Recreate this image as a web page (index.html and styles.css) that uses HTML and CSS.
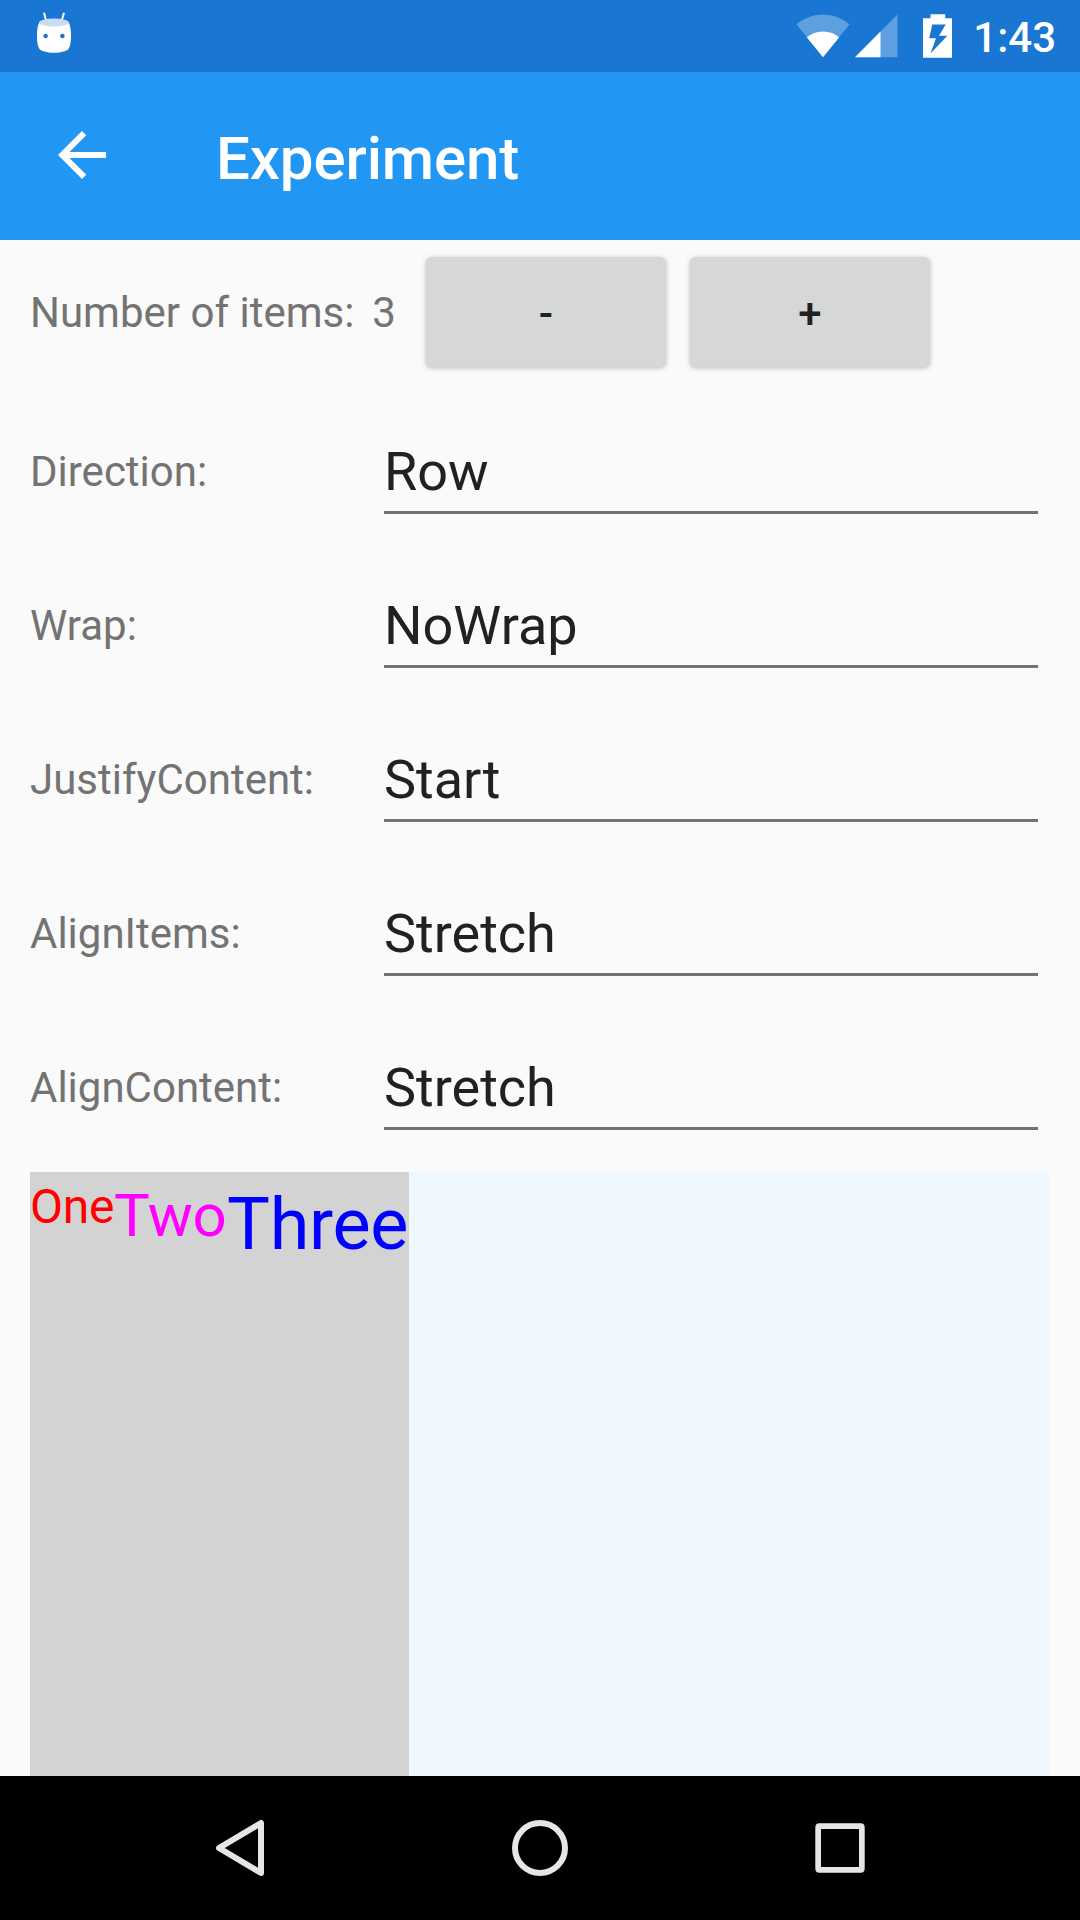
FILE: index.html
```html
<!DOCTYPE html>
<html lang="en">
<head>
<meta charset="utf-8">
<title>Experiment</title>
<link rel="stylesheet" href="styles.css">
</head>
<body>
<div class="screen">
  <header class="status-bar">
    <svg class="notification" width="36" height="42" viewBox="0 0 36 42">
      <path d="M8.2 1.5 10.2 9M27.8 1.5 25.6 9" fill="none" stroke="#fff" stroke-width="2" stroke-linecap="round"/>
      <path d="M3.5 10C1.8 13 1 17 1 23.500c0 6 .6 10.500 2.200 13C4.500 39 11 40.800 18 40.800s13.500-1.800 14.800-4.300C34.400 34 35 29.500 35 23.500 35 17 34.200 13 32.500 10z" fill="#fff"/>
      <ellipse cx="18" cy="10.500" rx="14.800" ry="4" fill="#c8dcf4"/>
      <circle cx="9.600" cy="24" r="2.300" fill="#1976d2"/>
      <circle cx="26.400" cy="24" r="2.300" fill="#1976d2"/>
    </svg>
    <div class="system-icons">
      <svg class="wifi" width="54" height="44" viewBox="0 0 54 44">
        <path d="M27 43.200.4 10.300C7.800 4.400 16.600.4 27 .4s19.200 4 26.600 9.900z" fill="#fff" opacity=".3"/>
        <path d="M27 43.200 10.800 23.300C15 19.600 20.500 17.400 27 17.400s12 2.200 16.200 5.900z" fill="#fff"/>
      </svg>
      <svg class="signal" width="43" height="44" viewBox="0 0 43 44">
        <path d="M0 43.200 42.500.4v42.800z" fill="#fff" opacity=".3"/>
        <path d="M0 43.200 25.500 17.500v25.700z" fill="#fff"/>
      </svg>
      <svg class="battery" width="30" height="45" viewBox="0 0 30 45">
        <path fill="#fff" fill-rule="evenodd" d="M7.500.2h14.800v4H29v39.600H0V4.200h7.500zM9.300 10.600 6.200 24.300H13L7.500 39.500 24.300 21.800H16L22.700 10.600z"/>
      </svg>
      <span class="clock">1:43</span>
    </div>
  </header>

  <div class="toolbar">
    <svg class="back" width="72" height="72" viewBox="0 0 24 24">
      <path fill="#fff" d="M20 11H7.830l5.590-5.590L12 4l-8 8 8 8 1.410-1.410L7.830 13H20z"/>
    </svg>
    <h1 class="title">Experiment</h1>
  </div>

  <main class="content">
    <div class="count-row">
      <span class="count-label">Number of items:</span>
      <span class="count">3</span>
      <div class="buttons">
        <button class="button">-</button>
        <button class="button">+</button>
      </div>
    </div>

    <div class="fields">
      <div class="field"><span class="label">Direction:</span><span class="picker">Row</span></div>
      <div class="field"><span class="label">Wrap:</span><span class="picker">NoWrap</span></div>
      <div class="field"><span class="label">JustifyContent:</span><span class="picker">Start</span></div>
      <div class="field"><span class="label">AlignItems:</span><span class="picker">Stretch</span></div>
      <div class="field"><span class="label">AlignContent:</span><span class="picker">Stretch</span></div>
    </div>

    <div class="flex-layout">
      <span class="item one">One</span>
      <span class="item two">Two</span>
      <span class="item three">Three</span>
    </div>
  </main>

  <nav class="nav-bar">
    <svg width="60" height="60" viewBox="0 0 60 60">
      <path d="M51 5v50L9 30z" fill="none" stroke="#e6e6e6" stroke-width="6" stroke-linejoin="round"/>
    </svg>
    <svg width="60" height="60" viewBox="0 0 60 60">
      <circle cx="30" cy="30" r="25" fill="none" stroke="#e6e6e6" stroke-width="6"/>
    </svg>
    <svg width="60" height="60" viewBox="0 0 60 60">
      <path fill="#e6e6e6" fill-rule="evenodd" d="M9.300 5.300h41.400a4 4 0 0 1 4 4v41.400a4 4 0 0 1-4 4H9.300a4 4 0 0 1-4-4V9.300a4 4 0 0 1 4-4zM11 11v38h38V11z"/>
    </svg>
  </nav>
</div>
</body>
</html>
```

FILE: styles.css
```css
* {
  box-sizing: border-box;
}

body {
  margin: 0;
  font-family: Roboto, sans-serif;
}

.screen {
  display: flex;
  flex-direction: column;
  width: 1080px;
  height: 1920px;
  overflow: hidden;
  background: #fafafa;
}

.status-bar {
  display: flex;
  justify-content: space-between;
  align-items: flex-start;
  height: 72px;
  padding: 0 24px 0 36px;
  background: #1976d2;
}

.notification {
  margin-top: 12px;
}

.system-icons {
  display: flex;
  align-items: flex-start;
}

.wifi,
.signal,
.battery {
  margin-top: 14px;
}

.signal {
  margin-left: 5px;
}

.battery {
  margin-left: 25px;
}

.clock {
  margin-left: 20px;
  padding-top: 13px;
  font-size: 42px;
  font-weight: 500;
  line-height: 50px;
  color: #fff;
}

.toolbar {
  display: flex;
  align-items: center;
  height: 168px;
  padding-left: 46px;
  background: #2196f3;
}

.back {
  margin-bottom: 2px;
}

.title {
  margin: 6px 0 0 98px;
  font-size: 60px;
  font-weight: 500;
  line-height: 70px;
  letter-spacing: -0.1px;
  color: #fff;
}

.content {
  display: flex;
  flex-direction: column;
  flex: 1;
  padding: 0 30px;
}

.count-row {
  display: flex;
  height: 137px;
  padding-top: 17px;
  font-size: 42px;
  line-height: 112px;
  color: #737373;
}

.count {
  width: 24px;
  margin-left: 18px;
}

.buttons {
  display: flex;
  gap: 24px;
  margin-left: auto;
  margin-right: 120px;
}

.button {
  width: 240px;
  height: 110px;
  padding: 3px 0 0;
  border: 0;
  border-radius: 6px;
  background: #d6d7d7;
  box-shadow: 0 1px 5px rgba(0, 0, 0, 0.26);
  font: 500 42px/107px Roboto, sans-serif;
  color: #212121;
}

.fields {
  display: grid;
  grid-auto-rows: 154px;
}

.field {
  display: flex;
  align-items: center;
  padding-top: 36px;
  padding-bottom: 17px;
}

.label {
  width: 354px;
  padding-top: 16px;
  font-size: 42px;
  line-height: 50px;
  color: #737373;
}

.picker {
  width: 654px;
  height: 101px;
  padding-top: 27px;
  border-bottom: 3px solid #737373;
  font-size: 54px;
  line-height: 64px;
  color: #212121;
}

.flex-layout {
  display: flex;
  flex: 1;
  margin-top: 25px;
  background: #f0f8ff;
}

.item {
  letter-spacing: -0.3px;
  background: #d3d3d3;
}

.one {
  width: 84px;
  padding-top: 7px;
  font-size: 48px;
  line-height: 56px;
  color: #f00;
}

.two {
  width: 113px;
  padding-top: 9px;
  font-size: 60px;
  line-height: 70px;
  color: #f0f;
}

.three {
  width: 182px;
  padding-top: 11px;
  font-size: 72px;
  line-height: 84px;
  color: #00f;
}

.nav-bar {
  display: grid;
  grid-template-columns: repeat(3, 300px);
  place-content: center;
  justify-items: center;
  height: 144px;
  background: #000;
}
```
